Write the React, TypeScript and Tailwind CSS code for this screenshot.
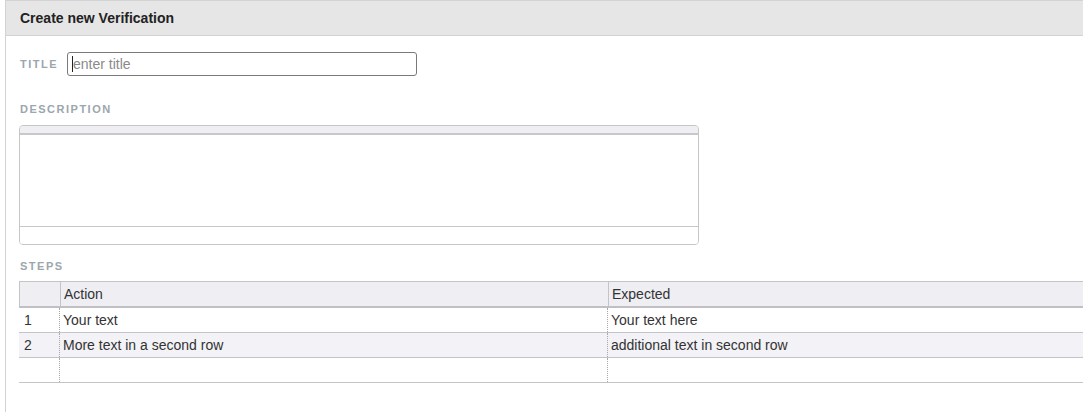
const steps = [
  { n: "1", action: "Your text", expected: "Your text here" },
  { n: "2", action: "More text in a second row", expected: "additional text in second row" },
  { n: "", action: "", expected: "" },
]

const Label = ({ children }: { children: string }) => (
  <div className="pl-[1px] text-[11px] font-bold leading-[13px] tracking-[1.5px] text-[#9ba6ad]">{children}</div>
)

export default function App() {
  return (
    <div className="min-h-[412px] bg-white pl-[5px] font-['Liberation_Sans',Arial,sans-serif] text-[14px] leading-[16px] text-[#333]">
      <div className="min-h-[412px] border-l border-[#d2d2d2]">
        <div className="flex h-[36px] items-center border-y border-[#d3d3d3] bg-[#e6e6e6] pl-[14px] text-[14px] font-bold text-[#222]">
          Create new Verification
        </div>

        <div className="pl-[13px]">
          <div className="mt-[16px] flex items-center">
            <div className="w-[48px]">
              <Label>TITLE</Label>
            </div>
            <div className="relative">
              <input
                className="h-[24px] w-[350px] rounded-[3px] border border-[#7a7a7a] pl-[5px] text-[14px] text-[#333] outline-none placeholder:text-[#8a8a8a]"
                placeholder="enter title"
              />
              <span className="absolute left-[5px] top-[4px] h-[16px] w-px bg-[#222]" />
            </div>
          </div>

          <div className="mt-[27px]">
            <Label>DESCRIPTION</Label>
          </div>
          <div className="mt-[9px] w-[680px] overflow-hidden rounded-[4px] border border-[#c6c6c6]">
            <div className="h-[9px] border-b-2 border-[#c8c8cc] bg-[#eeeef3]" />
            <div className="h-[91px] bg-white" />
            <div className="h-[18px] border-t border-[#c6c6c6] bg-white" />
          </div>

          <div className="mt-[15px]">
            <Label>STEPS</Label>
          </div>
          <div className="mt-[8px]">
            <div className="grid h-[27px] grid-cols-[40px_548px_1fr] border-t border-b-2 border-l border-[#c4c4c8] border-b-[#c0c0c4] bg-[#eeeef3]">
              <div />
              <div className="flex items-center border-l border-[#c4c4c8] pl-[3px]">Action</div>
              <div className="flex items-center border-l border-[#c4c4c8] pl-[3px]">Expected</div>
            </div>
            {steps.map((s, i) => (
              <div
                key={i}
                className={`grid h-[25px] grid-cols-[40px_548px_1fr] border-b border-[#c4c4c8] ${i === 1 ? "bg-[#f2f2f7]" : "bg-white"}`}
              >
                <div className="flex items-center pl-[5px]">{s.n}</div>
                <div className="flex items-center border-l border-dotted border-[#a8a8a8] pl-[3px]">{s.action}</div>
                <div className="flex items-center border-l border-dotted border-[#a8a8a8] pl-[3px]">{s.expected}</div>
              </div>
            ))}
          </div>
        </div>
      </div>
    </div>
  )
}
